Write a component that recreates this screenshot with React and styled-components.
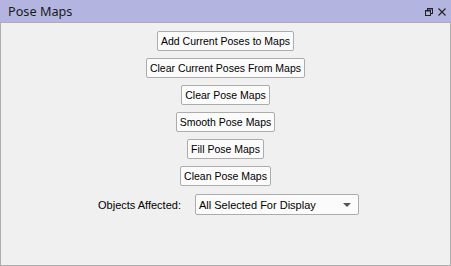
import React from "react";
import styled, { createGlobalStyle } from "styled-components";

const Global = createGlobalStyle`
  html, body { margin: 0; padding: 0; background: #f0f0f0; }
  #root { width: 451px; height: 266px; }
`;

const Window = styled.div`
  width: 451px;
  height: 266px;
  box-sizing: border-box;
  display: flex;
  flex-direction: column;
  font-family: "Liberation Sans", Arial, sans-serif;
`;

const TitleBar = styled.div`
  height: 22px;
  flex: none;
  background: #b4b4e1;
  display: flex;
  align-items: center;
  justify-content: space-between;
  padding: 0 5px 0 8px;
  box-sizing: border-box;
`;

const Title = styled.span`
  font-family: "Noto Sans", "Open Sans", sans-serif;
  font-size: 12.7px;
  color: #1a1a1a;
  line-height: 22px;
`;

const Controls = styled.div`
  display: flex;
  align-items: center;
  gap: 5px;
  margin-top: 2px;
`;

const Body = styled.div`
  flex: 1;
  background: #f0f0f0;
  border: 1px solid #adadad;
  display: flex;
  flex-direction: column;
  align-items: center;
  gap: 7px;
  padding-top: 8px;
  box-sizing: border-box;
`;

const Button = styled.button`
  height: 20px;
  box-sizing: border-box;
  padding: 0 3px;
  font-family: "Liberation Sans", Arial, sans-serif;
  font-size: 10.5px;
  color: #000;
  background: #fbfbfb;
  border: 1px solid #acacac;
  border-radius: 2px;
  line-height: 18px;
`;

const Row = styled.div`
  display: flex;
  align-items: center;
  gap: 14px;
  margin-left: 6px;
  margin-top: 1px;
`;

const Label = styled.span`
  font-size: 11px;
  color: #000;
`;

const Combo = styled.div`
  width: 164px;
  height: 21px;
  box-sizing: border-box;
  border: 1px solid #acacac;
  border-radius: 2px;
  background: #fbfbfb;
  display: flex;
  align-items: center;
  justify-content: space-between;
  padding: 0 6px 0 3px;
  font-size: 11px;
  color: #000;
`;

const Arrow = styled.span`
  width: 0;
  height: 0;
  border-left: 4px solid transparent;
  border-right: 4px solid transparent;
  border-top: 4px solid #555;
  margin-right: 1px;
`;

export default function App() {
  const buttons = [
    "Add Current Poses to Maps",
    "Clear Current Poses From Maps",
    "Clear Pose Maps",
    "Smooth Pose Maps",
    "Fill Pose Maps",
    "Clean Pose Maps",
  ];
  return (
    <>
      <Global />
      <Window>
        <TitleBar>
          <Title>Pose Maps</Title>
          <Controls>
            <svg width="8" height="8" viewBox="0 0 8 8">
              <rect x="2.5" y="0.5" width="5" height="5" fill="none" stroke="#222" />
              <rect x="2.5" y="0.5" width="5" height="1" fill="#222" />
              <rect x="0.5" y="2.5" width="5" height="5" fill="#b4b4e1" stroke="#222" />
              <rect x="0.5" y="2.5" width="5" height="1" fill="#222" />
            </svg>
            <svg width="8" height="8" viewBox="0 0 8 8">
              <path d="M0.5 0.5 L7.5 7.5 M7.5 0.5 L0.5 7.5" stroke="#222" strokeWidth="1.1" />
            </svg>
          </Controls>
        </TitleBar>
        <Body>
          {buttons.map((b) => (
            <Button key={b}>{b}</Button>
          ))}
          <Row>
            <Label>Objects Affected:</Label>
            <Combo>
              <span>All Selected For Display</span>
              <Arrow />
            </Combo>
          </Row>
        </Body>
      </Window>
    </>
  );
}
